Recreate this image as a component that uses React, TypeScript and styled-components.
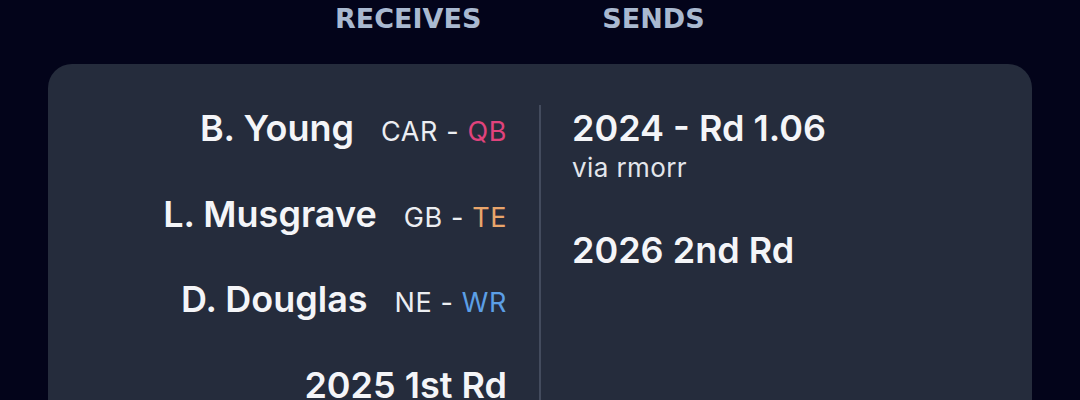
import React from "react";
import styled, { createGlobalStyle } from "styled-components";

const GlobalStyle = createGlobalStyle`
  html, body {
    margin: 0;
    padding: 0;
    background: #03041a;
    font-family: Inter, "Noto Sans", sans-serif;
    overflow: hidden;
  }
`;

const Page = styled.div`
  width: 1080px;
  height: 400px;
  background: #03041a;
  overflow: hidden;
`;

const Tabs = styled.div`
  display: flex;
  gap: 121px;
  padding-left: 335px;
  height: 64px;
  align-items: flex-start;
`;

const Tab = styled.div`
  font-family: "DejaVu Sans", Lato, sans-serif;
  font-weight: 700;
  font-size: 27px;
  line-height: 38px;
  color: #a9b9d0;
`;

const Card = styled.div`
  margin: 0 48px;
  background: #252c3c;
  border-radius: 24px;
  padding-top: 41px;
  height: 400px;
  display: grid;
  grid-template-columns: 1fr 2px 1fr;
`;

const Side = styled.div<{ $align: "left" | "right" }>`
  display: flex;
  flex-direction: column;
  align-items: ${(p) => (p.$align === "right" ? "flex-end" : "flex-start")};
  padding: ${(p) => (p.$align === "right" ? "0 32px 0 0" : "0 0 0 31px")};
`;

const Divider = styled.div`
  background: #434b5d;
  width: 2px;
`;

const Row = styled.div`
  display: flex;
  align-items: baseline;
  gap: 27px;
  height: 85.5px;
`;

const Name = styled.span`
  font-weight: 600;
  font-size: 36px;
  line-height: 46px;
  color: #f4f5f8;
`;

const Meta = styled.span`
  font-size: 27px;
  font-weight: 400;
  letter-spacing: 0.6px;
  color: #eceef2;
`;

const Pos = styled.span<{ $c: string }>`
  color: ${(p) => p.$c};
`;

const Pick = styled.div<{ $gap: number }>`
  display: flex;
  flex-direction: column;
  margin-bottom: ${(p) => p.$gap}px;
`;

const Via = styled.span`
  font-size: 26px;
  line-height: 30px;
  letter-spacing: 0.4px;
  color: #e3e6ec;
  margin-top: 2px;
`;

const players = [
  { name: "B. Young", team: "CAR", pos: "QB", color: "#e0437c" },
  { name: "L. Musgrave", team: "GB", pos: "TE", color: "#e9a56b" },
  { name: "D. Douglas", team: "NE", pos: "WR", color: "#5c9fe6" },
];

export default function App() {
  return (
    <Page>
      <GlobalStyle />
      <Tabs>
        <Tab>RECEIVES</Tab>
        <Tab>SENDS</Tab>
      </Tabs>
      <Card>
        <Side $align="right">
          {players.map((p) => (
            <Row key={p.name}>
              <Name>{p.name}</Name>
              <Meta>
                {p.team} - <Pos $c={p.color}>{p.pos}</Pos>
              </Meta>
            </Row>
          ))}
          <Row>
            <Name>2025 1st Rd</Name>
          </Row>
        </Side>
        <Divider />
        <Side $align="left">
          <Pick $gap={44}>
            <Name>2024 - Rd 1.06</Name>
            <Via>via rmorr</Via>
          </Pick>
          <Pick $gap={0}>
            <Name>2026 2nd Rd</Name>
          </Pick>
        </Side>
      </Card>
    </Page>
  );
}
